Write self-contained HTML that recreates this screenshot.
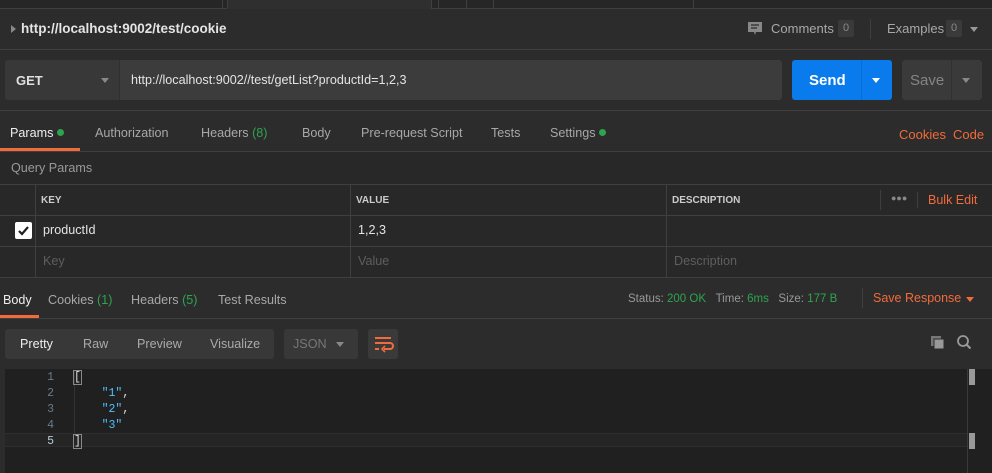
<!DOCTYPE html>
<html><head><meta charset="utf-8"><style>
*{margin:0;padding:0;box-sizing:border-box}
body{width:992px;height:473px;overflow:hidden;background:#2c2c2c;font-family:"Liberation Sans",sans-serif;font-size:13px;color:#c8c8c8;position:relative}
.a{position:absolute;white-space:nowrap}
.ln{position:absolute;background:#3f3f3f}
.g{color:#2ea44f}
.o{color:#f26b3a}
.t{font-size:12.6px}
</style></head><body>
<div class="a" style="left:0;top:0;width:992px;height:9px;background:#262626;border-bottom:1px solid #3f3f3f"></div>
<div class="a" style="left:227px;top:0;width:204px;height:9px;background:#2f2f2f"></div>
<div class="ln" style="left:222px;top:0;width:1px;height:8px"></div>
<div class="ln" style="left:227px;top:0;width:1px;height:8px"></div>
<div class="ln" style="left:431px;top:0;width:1px;height:8px"></div>
<div class="ln" style="left:438px;top:0;width:1px;height:8px"></div>
<div class="ln" style="left:466px;top:0;width:1px;height:8px"></div>
<div class="ln" style="left:493px;top:0;width:1px;height:8px"></div>
<div class="ln" style="left:693px;top:0;width:1px;height:8px"></div>
<div class="a" style="left:11px;top:25px;width:0;height:0;border-left:5px solid #888;border-top:4px solid transparent;border-bottom:4px solid transparent"></div>
<div class="a" style="left:21px;top:21px;font-weight:bold;font-size:13.5px;color:#e4e4e4">http://localhost:9002/test/cookie</div>
<svg class="a" style="left:747px;top:21px" width="16" height="16"><path d="M1 1h14v10H9l-1 3-1-3H1z" fill="#888"/><path d="M4 4h8M4 7h6" stroke="#2c2c2c" stroke-width="1.3"/></svg>
<div class="a" style="left:771px;top:21px;color:#a8a8a8">Comments</div>
<div class="a" style="left:838px;top:20px;width:16px;height:17px;background:#3a3a3a;border-radius:2px;font-size:11px;color:#888;text-align:center;line-height:17px">0</div>
<div class="ln" style="left:870px;top:19px;width:1px;height:20px"></div>
<div class="a" style="left:887px;top:21px;color:#a8a8a8">Examples</div>
<div class="a" style="left:946px;top:20px;width:16px;height:17px;background:#3a3a3a;border-radius:2px;font-size:11px;color:#888;text-align:center;line-height:17px">0</div>
<div class="a" style="left:970px;top:27px;border-top:5px solid #999;border-left:4px solid transparent;border-right:4px solid transparent"></div>
<div class="ln" style="left:0;top:49px;width:992px;height:1px"></div>
<div class="a" style="left:5px;top:60px;width:777px;height:40px;background:#3c3c3c;border-radius:3px"></div>
<div class="a" style="left:5px;top:60px;width:115px;height:40px;background:#383838;border-radius:3px 0 0 3px;border-right:1px solid #303030"></div>
<div class="a" style="left:16px;top:73px;font-weight:bold;color:#e0e0e0">GET</div>
<div class="a" style="left:101px;top:78px;border-top:5px solid #888;border-left:4px solid transparent;border-right:4px solid transparent"></div>
<div class="a" style="left:131px;top:73px;color:#e4e4e4;font-size:12.6px">http://localhost:9002//test/getList?productId=1,2,3</div>
<div class="a" style="left:792px;top:60px;width:100px;height:40px;background:#097bed;border-radius:3px"></div>
<div class="a" style="left:861px;top:60px;width:1px;height:40px;background:#0a6bd0"></div>
<div class="a" style="left:809px;top:72px;font-weight:bold;font-size:15px;color:#fff">Send</div>
<div class="a" style="left:872px;top:78px;border-top:5px solid #fff;border-left:4px solid transparent;border-right:4px solid transparent"></div>
<div class="a" style="left:902px;top:60px;width:80px;height:40px;background:#3a3a3a;border-radius:3px"></div>
<div class="a" style="left:951px;top:60px;width:1px;height:40px;background:#303030"></div>
<div class="a" style="left:910px;top:72px;font-size:15px;color:#858585">Save</div>
<div class="a" style="left:962px;top:78px;border-top:5px solid #888;border-left:4px solid transparent;border-right:4px solid transparent"></div>
<div class="ln" style="left:0;top:110px;width:992px;height:1px"></div>
<div class="a t" style="left:10px;top:126px;color:#eee">Params <span style="display:inline-block;width:7px;height:7px;border-radius:50%;background:#2ea44f;vertical-align:1px"></span></div>
<div class="a t" style="left:95px;top:126px;color:#a8a8a8">Authorization</div>
<div class="a t" style="left:201px;top:126px;color:#a8a8a8">Headers <span class="g">(8)</span></div>
<div class="a t" style="left:302px;top:126px;color:#a8a8a8">Body</div>
<div class="a t" style="left:361px;top:126px;color:#a8a8a8">Pre-request Script</div>
<div class="a t" style="left:491px;top:126px;color:#a8a8a8">Tests</div>
<div class="a t" style="left:550px;top:126px;color:#a8a8a8">Settings <span style="display:inline-block;width:7px;height:7px;border-radius:50%;background:#2ea44f;vertical-align:1px"></span></div>
<div class="a o" style="left:899px;top:127px">Cookies</div>
<div class="a o" style="left:953px;top:127px">Code</div>
<div class="ln" style="left:0;top:151px;width:992px;height:1px"></div>
<div class="a" style="left:0;top:148px;width:80px;height:3px;background:#f26b3a"></div>
<div class="a" style="left:0;top:152px;width:992px;height:126px;background:#282828"></div>
<div class="a t" style="left:11px;top:161px;color:#999">Query Params</div>
<div class="ln" style="left:0;top:184px;width:992px;height:1px"></div>
<div class="ln" style="left:0;top:215px;width:992px;height:1px"></div>
<div class="ln" style="left:0;top:246px;width:992px;height:1px"></div>
<div class="ln" style="left:0;top:277px;width:992px;height:1px"></div>
<div class="ln" style="left:35px;top:184px;width:1px;height:93px"></div>
<div class="ln" style="left:350px;top:184px;width:1px;height:93px"></div>
<div class="ln" style="left:666px;top:184px;width:1px;height:93px"></div>
<div class="ln" style="left:880px;top:190px;width:1px;height:20px"></div>
<div class="ln" style="left:917px;top:192px;width:1px;height:16px"></div>
<div class="a" style="left:41px;top:195px;font-size:10px;font-weight:bold;color:#ccc">KEY</div>
<div class="a" style="left:356px;top:195px;font-size:10px;font-weight:bold;color:#ccc">VALUE</div>
<div class="a" style="left:672px;top:195px;font-size:10px;font-weight:bold;color:#ccc">DESCRIPTION</div>
<div class="a" style="left:891px;top:193px;color:#888;font-size:9px;letter-spacing:0px">●●●</div>
<div class="a o" style="left:928px;top:193px;font-size:12.5px">Bulk Edit</div>
<div class="a" style="left:15px;top:222px;width:17px;height:17px;background:#fff;border-radius:2px"></div>
<svg class="a" style="left:15px;top:222px" width="17" height="17"><path d="M4 9l3 3 6-7" stroke="#222" stroke-width="2.2" fill="none"/></svg>
<div class="a t" style="left:43px;top:223px;color:#e4e4e4">productId</div>
<div class="a t" style="left:358px;top:223px;color:#e4e4e4">1,2,3</div>
<div class="a t" style="left:43px;top:254px;color:#5e5e5e">Key</div>
<div class="a t" style="left:358px;top:254px;color:#5e5e5e">Value</div>
<div class="a t" style="left:674px;top:254px;color:#5e5e5e">Description</div>
<div class="a t" style="left:3px;top:293px;color:#eee">Body</div>
<div class="a t" style="left:48px;top:293px;color:#a8a8a8">Cookies <span class="g">(1)</span></div>
<div class="a t" style="left:131px;top:293px;color:#a8a8a8">Headers <span class="g">(5)</span></div>
<div class="a t" style="left:218px;top:293px;color:#a8a8a8">Test Results</div>
<div class="a" style="left:628px;top:293px;font-size:11.5px;color:#999">Status: <span class="g">200 OK</span>&nbsp;&nbsp;&nbsp;Time: <span class="g">6ms</span>&nbsp;&nbsp;&nbsp;Size: <span class="g">177 B</span></div>
<div class="ln" style="left:862px;top:288px;width:1px;height:20px"></div>
<div class="a o" style="left:873px;top:291px;font-size:12.5px">Save Response</div>
<div class="a" style="left:966px;top:297px;border-top:5px solid #f26b3a;border-left:4px solid transparent;border-right:4px solid transparent"></div>
<div class="ln" style="left:0;top:318px;width:992px;height:1px"></div>
<div class="a" style="left:0;top:315px;width:39px;height:3px;background:#f26b3a"></div>
<div class="a" style="left:5px;top:329px;width:269px;height:30px;background:#383838;border-radius:3px"></div>
<div class="a t" style="left:20px;top:337px;color:#eee">Pretty</div>
<div class="a t" style="left:83px;top:337px;color:#aaa">Raw</div>
<div class="a t" style="left:137px;top:337px;color:#aaa">Preview</div>
<div class="a t" style="left:210px;top:337px;color:#aaa">Visualize</div>
<div class="a" style="left:284px;top:329px;width:74px;height:30px;background:#383838;border-radius:3px"></div>
<div class="a t" style="left:293px;top:337px;color:#777">JSON</div>
<div class="a" style="left:336px;top:342px;border-top:5px solid #888;border-left:4px solid transparent;border-right:4px solid transparent"></div>
<div class="a" style="left:368px;top:329px;width:30px;height:30px;background:#3a3a3a;border-radius:3px"></div>
<svg class="a" style="left:368px;top:329px" width="30" height="30"><path d="M7 9h16M7 14h15a3 3 0 010 6h-6M7 20h4" stroke="#f26b3a" stroke-width="2" fill="none"/><path d="M17 17l-3 3 3 3" stroke="#f26b3a" stroke-width="1.6" fill="none"/></svg>
<svg class="a" style="left:930px;top:335px" width="16" height="16"><rect x="1" y="1" width="10" height="10" fill="#777"/><rect x="4" y="4" width="10" height="10" fill="#999" stroke="#2c2c2c"/></svg>
<svg class="a" style="left:956px;top:334px" width="16" height="16"><circle cx="7" cy="7" r="5" stroke="#999" stroke-width="1.8" fill="none"/><path d="M10.5 10.5l4 4" stroke="#999" stroke-width="2"/></svg>
<div class="a" style="left:5px;top:369px;width:987px;height:104px;background:#202020"></div>
<div class="a" style="left:5px;top:433px;width:963px;height:14px;background:#252525;border-top:1px solid #2e2e2e;border-bottom:1px solid #2e2e2e"></div>
<div class="a" style="left:967px;top:369px;width:1px;height:104px;background:#3a3a3a"></div>
<div class="a" style="left:969px;top:369px;width:6px;height:16px;background:#999"></div>
<div class="a" style="left:969px;top:433px;width:6px;height:16px;background:#999"></div>
<div class="a" style="left:74px;top:370px;width:1px;height:63px;background:#333"></div>
<div style="position:absolute;left:0;top:370px;font-family:'Liberation Mono',monospace;font-size:11.5px;line-height:16px;color:#6b7a85;width:54px;text-align:right">1<br>2<br>3<br>4<br><span style="color:#b8c8d0">5</span></div>
<div style="position:absolute;left:74px;top:370px;font-family:'Liberation Mono',monospace;font-size:11.5px;line-height:16px;color:#ddd;white-space:pre"><span style="outline:1px solid #888">[</span>
    <span style="color:#4fc1ff">"1"</span>,
    <span style="color:#4fc1ff">"2"</span>,
    <span style="color:#4fc1ff">"3"</span>
<span style="outline:1px solid #888">]</span></div>
</body></html>
